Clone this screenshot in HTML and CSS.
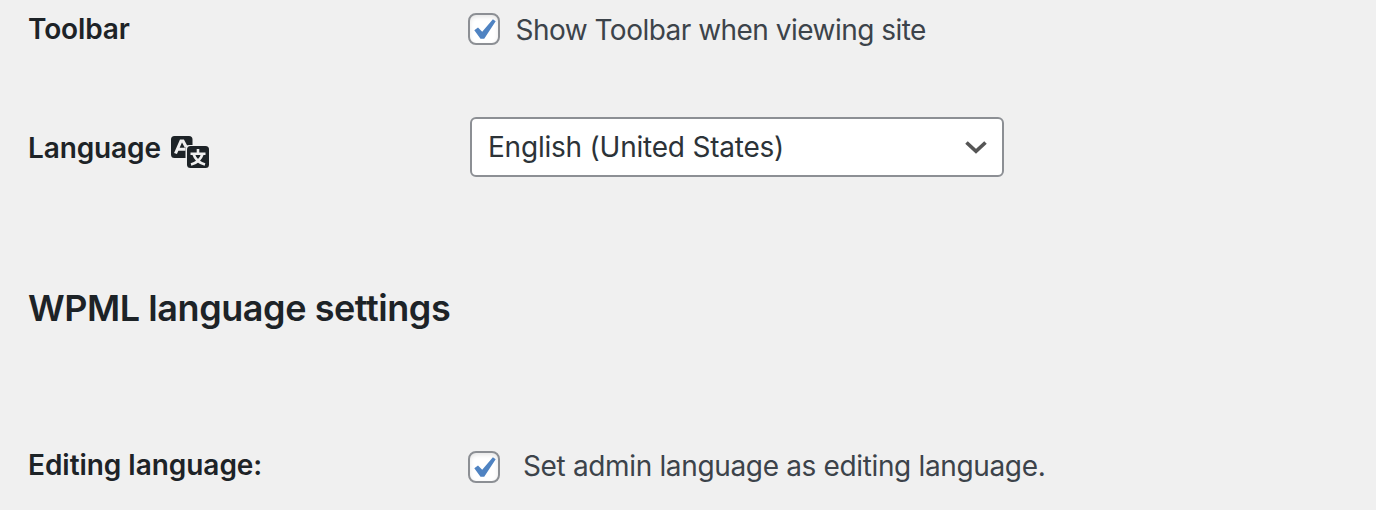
FILE: index.html
```html
<!DOCTYPE html>
<html lang="en">
<head>
<meta charset="utf-8">
<title>Profile settings</title>
<link rel="stylesheet" href="styles.css">
</head>
<body>
<form class="settings">
  <div class="row row-toolbar">
    <div class="label"><span class="t-toolbar">Toolbar</span></div>
    <label class="option">
      <span class="check"><svg viewBox="0 0 32 32"><path d="M6.300 17.200L10 14.500L14.200 18.800L24.900 6.300L27.700 8.300L16.200 25.700H12.500Z"/></svg></span>
      <span class="t-show">Show Toolbar when viewing site</span>
    </label>
  </div>
  <div class="row row-language">
    <div class="label"><span class="t-language">Language</span>
      <svg class="translate" viewBox="0 0 40 34"><path fill="#1d2327" d="M4.500 1H19Q22.500 1 22.500 4.500V10H19Q15.500 10 15.500 13.500V23H4.500Q1 23 1 19.500V4.500Q1 1 4.500 1Z"/><path fill="none" stroke="#f0f0f0" stroke-width="3.100" d="M5.500 18.500L11 6H13L16.200 12M8 14.300H15.500"/><rect x="17" y="11" width="22" height="22" rx="3.500" fill="#1d2327"/><path fill="none" stroke="#f0f0f0" stroke-width="2.600" d="M28 14V18.500M20.500 18.700H35.500M23.500 19Q26 27 35 29.500M32.500 19Q30 27 21 29.500"/></svg>
    </div>
    <div class="select"><span class="t-select">English (United States)</span>
      <svg class="chevron" viewBox="0 0 24 16"><path d="M2.500 3.500L12 12.300L21.500 3.500"/></svg>
    </div>
  </div>
  <h2><span class="t-heading">WPML language settings</span></h2>
  <div class="row row-editing">
    <div class="label"><span class="t-editing">Editing language:</span></div>
    <label class="option wide">
      <span class="check"><svg viewBox="0 0 32 32"><path d="M6.300 17.200L10 14.500L14.200 18.800L24.900 6.300L27.700 8.300L16.200 25.700H12.500Z"/></svg></span>
      <span class="t-set">Set admin language as editing language.</span>
    </label>
  </div>
</form>
</body>
</html>
```
FILE: styles.css
```css
* { box-sizing: border-box; }
body { margin: 0; background: #f0f0f0; font-family: Inter, sans-serif; font-size: 28px; color: #3c434a; overflow: hidden; }
.settings { height: 510px; padding-left: 28px; }
.row { display: grid; grid-template-columns: 440px 1fr; align-items: center; }
.row-toolbar { height: 58px; }
.row-language { height: 60px; margin-top: 59px; }
.row-editing { height: 60px; margin-top: 106px; }
.label { display: flex; align-items: center; color: #1d2327; font-weight: 620; letter-spacing: -0.13px; }
.row-language .label { padding-top: 2px; }
.row-editing .label { padding-bottom: 4px; letter-spacing: -0.04px; }
.option { display: flex; align-items: center; gap: 16px; }
.wide { gap: 23px; }
.check { width: 32px; height: 32px; flex: none; background: #fff; border: 2px solid #8c8f94; border-radius: 8px; box-shadow: inset 0 2px 4px rgba(0, 0, 0, .1); }
.check svg { display: block; width: 32px; height: 32px; margin: -2px; fill: #4f83c2; }
.translate { width: 40px; height: 34px; margin: 8px 0 0 9px; }
.select { display: flex; align-items: center; justify-content: space-between; width: 534px; height: 60px; margin-left: 2px; padding: 0 14px 0 16px; background: #fff; border: 2px solid #8c8f94; border-radius: 6px; color: #2c3338; }
.chevron { width: 24px; height: 16px; fill: none; stroke: #555; stroke-width: 3.7; }
h2 { margin: 108px 0 0; height: 46px; line-height: 46px; font-size: 36px; font-weight: 620; color: #1d2327; }
span { white-space: nowrap; }
.t-show { letter-spacing: -.52px; padding-top: 2px; margin-left: -0.5px; }
.t-set { letter-spacing: -.35px; padding-bottom: 2px; }
.t-select { letter-spacing: -.22px; }
.t-heading { letter-spacing: -.44px; }
```
